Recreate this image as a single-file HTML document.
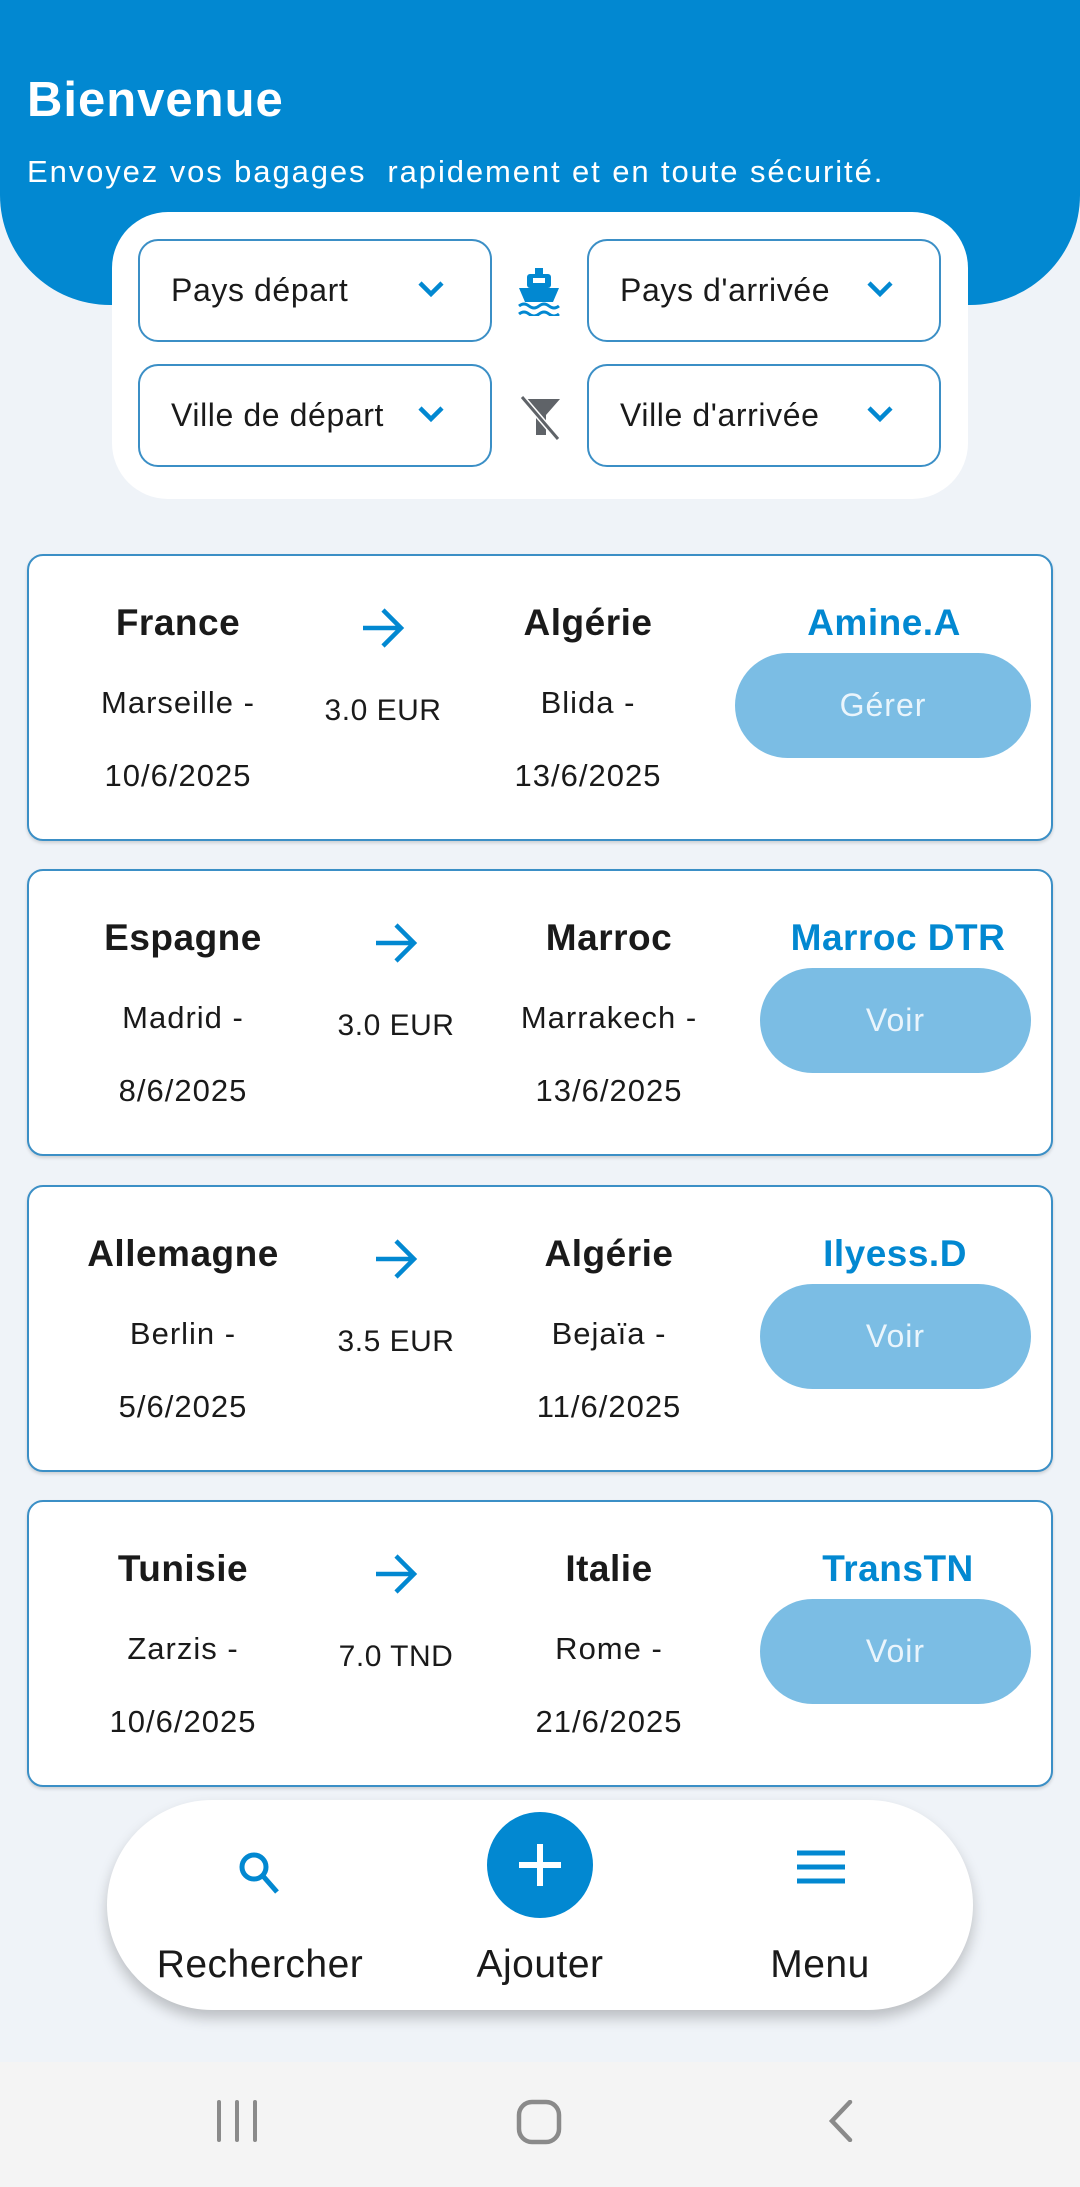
<!DOCTYPE html>
<html><head><meta charset="utf-8"><style>
*{margin:0;padding:0;box-sizing:border-box}
body{width:1080px;height:2187px;background:#eff3f8;font-family:"Liberation Sans",sans-serif;position:relative;overflow:hidden;color:#1a1a1a}
.abs{position:absolute}
.hdr{left:0;top:0;width:1080px;height:305px;background:#0288d1;border-radius:0 0 110px 110px}
.panel{left:112px;top:212px;width:856px;height:287px;background:#fff;border-radius:56px}
.dd{width:354px;height:103px;border:2px solid #3b8fc6;border-radius:20px;background:#fff;font-size:32px;letter-spacing:0.6px;display:flex;align-items:center;padding-left:31px}
.dd svg{position:absolute;right:44px;top:38px}
.card{left:27px;width:1026px;height:287px;background:#fff;border:2px solid #3b8fc6;border-radius:16px;box-shadow:0 2px 3px rgba(0,0,0,.15)}
.t{position:absolute;transform:translateX(-50%);white-space:nowrap;text-align:center}
.b{font-weight:bold;font-size:37px;top:46px;letter-spacing:0.5px}
.r1{font-size:31px;top:129px;letter-spacing:1px}
.r2{font-size:31px;top:202px;letter-spacing:1px}
.pr{font-size:30px;top:138px;letter-spacing:0.5px}
.nm{font-weight:bold;font-size:37px;top:46px;color:#0288d1;letter-spacing:0.5px}
.btn{position:absolute;top:97px;height:105px;border-radius:53px;background:#7bbde4;color:#eaf5fc;font-size:32px;letter-spacing:1px;display:flex;align-items:center;justify-content:center;right:20px}
.arr{position:absolute;top:50px}
.nav{left:107px;top:1800px;width:866px;height:210px;background:#fff;border-radius:105px;box-shadow:0 8px 14px rgba(0,0,0,.22)}
.lbl{font-size:39px;top:143px;letter-spacing:0.5px}
</style></head><body>
<div class="abs hdr"></div>
<div class="abs" style="left:27px;top:72px;color:#fff;font-weight:bold;font-size:49px;letter-spacing:1px">Bienvenue</div>
<div class="abs" style="left:27px;top:154px;color:#fff;font-size:31px;letter-spacing:1.9px;white-space:nowrap">Envoyez vos bagages&nbsp; rapidement et en toute sécurité.</div>
<div class="abs panel"></div>
<div class="abs dd" style="left:138px;top:239px">Pays départ<svg width="30" height="20" viewBox="0 0 30 20"><path d="M4 4l11 11 11-11" stroke="#0288d1" stroke-width="4.5" fill="none"/></svg></div>
<div class="abs dd" style="left:587px;top:239px">Pays d'arrivée<svg width="30" height="20" viewBox="0 0 30 20"><path d="M4 4l11 11 11-11" stroke="#0288d1" stroke-width="4.5" fill="none"/></svg></div>
<div class="abs dd" style="left:138px;top:364px">Ville de départ<svg width="30" height="20" viewBox="0 0 30 20"><path d="M4 4l11 11 11-11" stroke="#0288d1" stroke-width="4.5" fill="none"/></svg></div>
<div class="abs dd" style="left:587px;top:364px">Ville d'arrivée<svg width="30" height="20" viewBox="0 0 30 20"><path d="M4 4l11 11 11-11" stroke="#0288d1" stroke-width="4.5" fill="none"/></svg></div>
<svg class="abs" style="left:517px;top:268px" width="44" height="48" viewBox="0 0 44 48"><rect x="18" y="0" width="8" height="6" fill="#0288d1"/><rect x="10" y="6" width="24" height="14" rx="3" fill="#0288d1"/><path d="M2 20h40l-6 14H8z" fill="#0288d1"/><path d="M2 38q5-4 10 0t10 0 10 0 10 0M2 46q5-4 10 0t10 0 10 0 10 0" stroke="#0288d1" stroke-width="3" fill="none"/><rect x="16" y="10" width="12" height="5" fill="#fff"/></svg>
<svg class="abs" style="left:518px;top:395px" width="44" height="46" viewBox="0 0 44 46"><path d="M2 4h40L28 20v20h-10V20z" fill="#5f6368"/><path d="M4 2l36 42" stroke="#fff" stroke-width="6"/><path d="M4 2l36 42" stroke="#5f6368" stroke-width="3"/></svg>

<div class="abs card" style="top:554px">
<div class="t b" style="left:149px">France</div><div class="t r1" style="left:149px">Marseille -</div><div class="t r2" style="left:149px">10/6/2025</div>
<svg class="arr" style="left:330px" width="48" height="44" viewBox="0 0 48 44"><path d="M4 22h38M24 4l18 18-18 18" stroke="#0288d1" stroke-width="4.5" fill="none"/></svg>
<div class="t pr" style="left:354px">3.0 EUR</div>
<div class="t b" style="left:559px">Algérie</div><div class="t r1" style="left:559px">Blida -</div><div class="t r2" style="left:559px">13/6/2025</div>
<div class="t nm" style="left:855px">Amine.A</div>
<div class="btn" style="width:296px">Gérer</div>
</div>

<div class="abs card" style="top:869px">
<div class="t b" style="left:154px">Espagne</div><div class="t r1" style="left:154px">Madrid -</div><div class="t r2" style="left:154px">8/6/2025</div>
<svg class="arr" style="left:343px" width="48" height="44" viewBox="0 0 48 44"><path d="M4 22h38M24 4l18 18-18 18" stroke="#0288d1" stroke-width="4.5" fill="none"/></svg>
<div class="t pr" style="left:367px">3.0 EUR</div>
<div class="t b" style="left:580px">Marroc</div><div class="t r1" style="left:580px">Marrakech -</div><div class="t r2" style="left:580px">13/6/2025</div>
<div class="t nm" style="left:869px">Marroc DTR</div>
<div class="btn" style="width:271px">Voir</div>
</div>

<div class="abs card" style="top:1185px">
<div class="t b" style="left:154px">Allemagne</div><div class="t r1" style="left:154px">Berlin -</div><div class="t r2" style="left:154px">5/6/2025</div>
<svg class="arr" style="left:343px" width="48" height="44" viewBox="0 0 48 44"><path d="M4 22h38M24 4l18 18-18 18" stroke="#0288d1" stroke-width="4.5" fill="none"/></svg>
<div class="t pr" style="left:367px">3.5 EUR</div>
<div class="t b" style="left:580px">Algérie</div><div class="t r1" style="left:580px">Bejaïa -</div><div class="t r2" style="left:580px">11/6/2025</div>
<div class="t nm" style="left:866px">Ilyess.D</div>
<div class="btn" style="width:271px">Voir</div>
</div>

<div class="abs card" style="top:1500px">
<div class="t b" style="left:154px">Tunisie</div><div class="t r1" style="left:154px">Zarzis -</div><div class="t r2" style="left:154px">10/6/2025</div>
<svg class="arr" style="left:343px" width="48" height="44" viewBox="0 0 48 44"><path d="M4 22h38M24 4l18 18-18 18" stroke="#0288d1" stroke-width="4.5" fill="none"/></svg>
<div class="t pr" style="left:367px">7.0 TND</div>
<div class="t b" style="left:580px">Italie</div><div class="t r1" style="left:580px">Rome -</div><div class="t r2" style="left:580px">21/6/2025</div>
<div class="t nm" style="left:869px">TransTN</div>
<div class="btn" style="width:271px">Voir</div>
</div>

<div class="abs nav">
<svg class="abs" style="left:128px;top:48px" width="50" height="50" viewBox="0 0 50 50"><circle cx="19" cy="19" r="12" stroke="#0288d1" stroke-width="5" fill="none"/><path d="M28 28l14 16" stroke="#0288d1" stroke-width="5"/></svg>
<div class="abs" style="left:380px;top:12px;width:106px;height:106px;border-radius:50%;background:#0288d1"></div>
<svg class="abs" style="left:409px;top:41px" width="48" height="48" viewBox="0 0 48 48"><path d="M24 3v42M3 24h42" stroke="#fff" stroke-width="6"/></svg>
<svg class="abs" style="left:688px;top:48px" width="52" height="40" viewBox="0 0 52 40"><path d="M2 5h48M2 19h48M2 33h48" stroke="#0288d1" stroke-width="5"/></svg>
<div class="t lbl" style="left:153px">Rechercher</div>
<div class="t lbl" style="left:433px">Ajouter</div>
<div class="t lbl" style="left:713px">Menu</div>
</div>

<div class="abs" style="left:0;top:2062px;width:1080px;height:125px;background:#f4f4f4"></div>
<svg class="abs" style="left:215px;top:2100px" width="44" height="42" viewBox="0 0 44 42"><path d="M4 2v38M22 2v38M40 2v38" stroke="#8a8a8a" stroke-width="4" stroke-linecap="round"/></svg>
<svg class="abs" style="left:516px;top:2099px" width="46" height="46" viewBox="0 0 46 46"><rect x="3" y="3" width="40" height="40" rx="13" stroke="#8a8a8a" stroke-width="4.5" fill="none"/></svg>
<svg class="abs" style="left:826px;top:2100px" width="30" height="42" viewBox="0 0 30 42"><path d="M24 2L6 21l18 19" stroke="#8a8a8a" stroke-width="4.5" fill="none" stroke-linecap="round"/></svg>
</body></html>
